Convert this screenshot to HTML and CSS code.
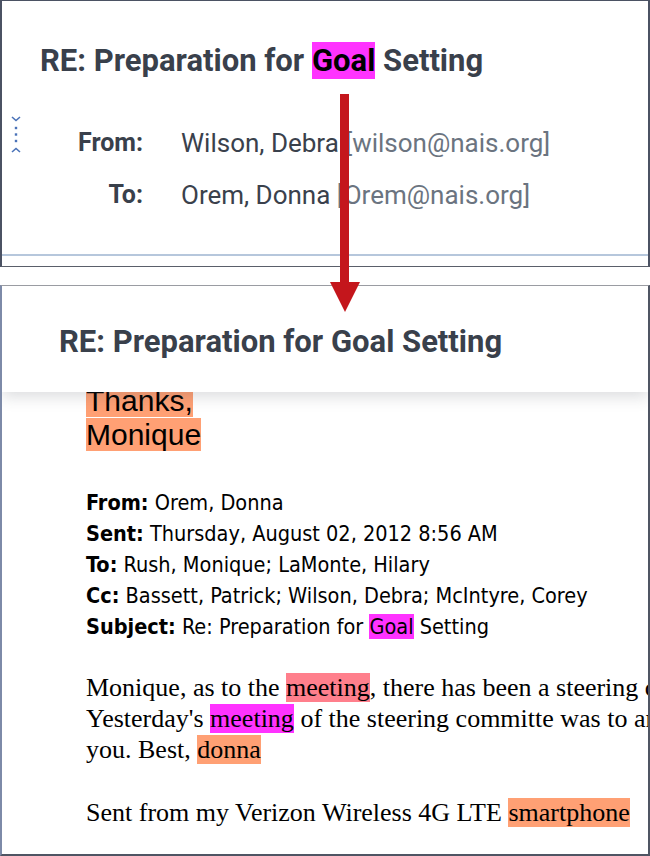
FILE: index.html
```html
<!DOCTYPE html>
<html lang="en">
<head>
<meta charset="utf-8">
<title>RE: Preparation for Goal Setting</title>
<link rel="stylesheet" href="styles.css">
</head>
<body>
<div class="page">
  <section class="panel panel-top">
    <h1 class="title">RE: Preparation for <mark class="hl hl-magenta">Goal</mark> Setting</h1>
    <div class="meta">
      <svg class="expand-icon" viewBox="0 0 12 40" width="12" height="40" aria-hidden="true">
        <path d="M2 2 L6 5.5 L10 2" fill="none" stroke="#4a72b8" stroke-width="1.6"/>
        <rect x="4.8" y="11.8" width="2.4" height="2.4" fill="#4a72b8"/>
        <rect x="4.8" y="18.3" width="2.4" height="2.4" fill="#4a72b8"/>
        <rect x="4.8" y="24.8" width="2.4" height="2.4" fill="#4a72b8"/>
        <path d="M2 37 L6 33.5 L10 37" fill="none" stroke="#4a72b8" stroke-width="1.6"/>
      </svg>
      <dl class="meta-grid">
        <dt>From:</dt><dd>Wilson, Debra <span class="addr">[wilson@nais.org]</span></dd>
        <dt>To:</dt><dd>Orem, Donna <span class="addr">[Orem@nais.org]</span></dd>
      </dl>
    </div>
    <div class="rule"></div>
  </section>

  <section class="panel panel-bottom">
    <header class="sticky-head">
      <h2 class="title">RE: Preparation for Goal Setting</h2>
    </header>
    <div class="message">
      <p class="sig"><span class="hl hl-orange">Thanks,</span><br><span class="hl hl-orange">Monique</span></p>
      <div class="quoted-head">
        <div><b>From:</b> Orem, Donna</div>
        <div><b>Sent:</b> Thursday, August 02, 2012 8:56 AM</div>
        <div><b>To:</b> Rush, Monique; LaMonte, Hilary</div>
        <div><b>Cc:</b> Bassett, Patrick; Wilson, Debra; McIntyre, Corey</div>
        <div><b>Subject:</b> Re: Preparation for <span class="hl hl-magenta">Goal</span> Setting</div>
      </div>
      <p class="body-text">Monique, as to the <span class="hl hl-pink">meeting</span>, there has been a steering committee formed.<br>Yesterday's <span class="hl hl-magenta">meeting</span> of the steering committe was to analyze the survey results for<br>you. Best, <span class="hl hl-orange">donna</span></p>
      <p class="body-text body-text-last">Sent from my Verizon Wireless 4G LTE <span class="hl hl-orange">smartphone</span></p>
    </div>
  </section>

  <svg class="arrow" viewBox="0 0 30 218" width="30" height="218" aria-hidden="true">
    <rect x="10" y="0" width="9" height="190" fill="#c4161c"/>
    <polygon points="0,188 30,188 15,218" fill="#c4161c"/>
  </svg>
</div>
</body>
</html>
```

FILE: styles.css
```css
* { box-sizing: border-box; }

html, body {
  margin: 0;
  padding: 0;
  background: #ffffff;
}

.page {
  position: relative;
  width: 650px;
  height: 856px;
  overflow: hidden;
}

.panel {
  background: #ffffff;
}

.title {
  margin: 0;
  font-family: Roboto, "Liberation Sans", sans-serif;
  font-weight: 700;
  font-size: 31px;
  line-height: normal;
  color: #39404b;
  white-space: nowrap;
}

.hl {
  color: #000000;
}

.hl-magenta { background: #ff33ff; }
.hl-orange { background: #ffa074; }
.hl-pink { background: #ff7f8c; }

mark.hl { padding: 0; }

/* ---------- top panel ---------- */
.panel-top {
  border-top: 1px solid #4b5263;
  border-left: 2px solid #4b5263;
  border-right: 2px solid #4b5263;
  border-bottom: 1px solid #5a5f6a;
  padding-bottom: 10px;
}

.panel-top .title {
  padding: 41px 0 0 38px;
}

.meta {
  display: flex;
  align-items: flex-start;
  margin-top: 35px;
}

.expand-icon {
  display: block;
  margin: 1px 0 0 8px;
  flex: none;
}

.meta-grid {
  display: grid;
  grid-template-columns: 80px auto;
  column-gap: 38px;
  row-gap: 21.5px;
  margin: 14px 0 0 41px;
  font-family: Roboto, "Liberation Sans", sans-serif;
  font-size: 26px;
  line-height: normal;
  color: #3a414c;
  white-space: nowrap;
}

.meta-grid dt {
  text-align: right;
  font-weight: 700;
  font-size: 25px;
  color: #39404b;
}

.meta-grid dd {
  margin: 0;
}

.addr {
  color: #6b7480;
}

.rule {
  height: 2px;
  margin-top: 44px;
  background: #b6c7dc;
}

/* ---------- bottom panel ---------- */
.panel-bottom {
  margin-top: 18px;
  height: 571px;
  border-top: 1px solid #9a9ca2;
  border-left: 2px solid #7d8aa8;
  border-right: 2px solid #4f5563;
  border-bottom: 2px solid #4f5563;
  overflow: hidden;
}

.sticky-head {
  position: relative;
  z-index: 1;
  height: 106px;
  padding: 37px 0 0 57px;
  background: #ffffff;
  box-shadow: 0 5px 14px rgba(60, 64, 80, 0.18);
}

.message {
  margin-top: -8px;
  padding-left: 84px;
  white-space: nowrap;
}

.sig {
  margin: 0;
  font-family: "Liberation Sans", Arial, sans-serif;
  font-size: 30px;
  line-height: normal;
  color: #000000;
}

.quoted-head {
  margin-top: 35px;
  font-family: "DejaVu Sans Condensed", "DejaVu Sans", sans-serif;
  font-stretch: condensed;
  font-size: 21.5px;
  line-height: 31px;
  color: #000000;
}

.quoted-head b {
  font-weight: 700;
}

.body-text {
  margin: 30px 0 0;
  font-family: "Liberation Serif", "Times New Roman", serif;
  font-size: 26px;
  line-height: 31px;
  color: #000000;
}

.body-text-last {
  margin-top: 32px;
}

/* ---------- overlay arrow ---------- */
.arrow {
  position: absolute;
  z-index: 2;
  left: 330px;
  top: 94px;
  display: block;
}
```
